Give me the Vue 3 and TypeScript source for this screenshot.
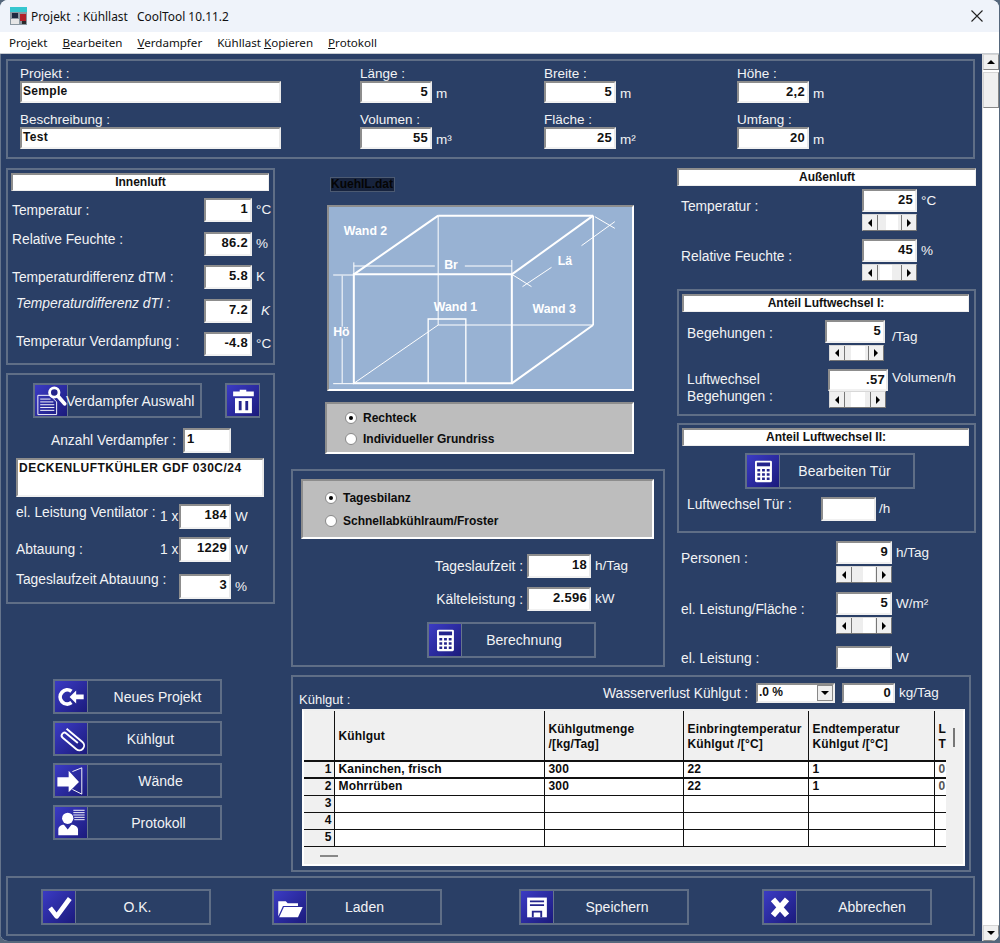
<script setup lang="ts">
const titleText = 'Projekt  : Kühllast   CoolTool 10.11.2'
const topFields = [
  { label: 'Projekt :', value: 'Semple', unit: '', wide: true },
  { label: 'Länge :', value: '5', unit: 'm', wide: false },
  { label: 'Breite :', value: '5', unit: 'm', wide: false },
  { label: 'Höhe :', value: '2,2', unit: 'm', wide: false },
  { label: 'Beschreibung :', value: 'Test', unit: '', wide: true },
  { label: 'Volumen :', value: '55', unit: 'm³', wide: false },
  { label: 'Fläche :', value: '25', unit: 'm²', wide: false },
  { label: 'Umfang :', value: '20', unit: 'm', wide: false },
]
const innenRows = [
  { label: 'Temperatur :', value: '1', unit: '°C', cls: '' },
  { label: 'Relative Feuchte :', value: '86.2', unit: '%', cls: 'lift4' },
  { label: 'Temperaturdifferenz dTM :', value: '5.8', unit: 'K', cls: '' },
  { label: 'Temperaturdifferenz dTI :', value: '7.2', unit: 'K', cls: 'lift7 ital' },
  { label: 'Temperatur Verdampfung :', value: '-4.8', unit: '°C', cls: 'lift3 ind' },
]
const sideButtons = [
  { label: 'Neues Projekt', icon: '#ic-back', shift: 7 },
  { label: 'Kühlgut', icon: '#ic-clip', shift: -7 },
  { label: 'Wände', icon: '#ic-wall', shift: 13 },
  { label: 'Protokoll', icon: '#ic-person', shift: 9 },
]
const footButtons = [
  { label: 'O.K.', icon: '#ic-check', shift: -10 },
  { label: 'Laden', icon: '#ic-folder', shift: -18 },
  { label: 'Speichern', icon: '#ic-floppy', shift: -7 },
  { label: 'Abbrechen', icon: '#ic-x', shift: 17 },
]
const goods = [
  ['1', 'Kaninchen, frisch', '300', '22', '1', '0'],
  ['2', 'Mohrrüben', '300', '22', '1', '0'],
  ['3', '', '', '', '', ''],
  ['4', '', '', '', '', ''],
  ['5', '', '', '', '', ''],
]
</script>

<template>
  <div class="window">
    <svg width="0" height="0" class="sprite">
      <symbol id="ic-calc" viewBox="0 0 33 33">
        <rect x="8" y="6" width="18" height="23" rx="1.5" fill="#fff" />
        <rect x="10" y="8" width="14" height="4" fill="#24248c" />
        <path d="M10.500 15h3v2.500h-3zM15.500 15h3v2.500h-3zM20.500 15h3v2.500h-3zM10.500 19.500h3v2.500h-3zM15.500 19.500h3v2.500h-3zM20.500 19.500h3v2.500h-3zM10.500 24h3v2.500h-3zM15.500 24h3v2.500h-3zM20.500 24h3v2.500h-3z" fill="#24248c" />
      </symbol>
      <symbol id="ic-search" viewBox="0 0 33 33">
        <path d="M2.500 11h13l7 7v13.500h-20z" fill="none" stroke="#fff" />
        <path d="M5 15h11M5 18h14M5 21h15M5 24h15M5 27h15" stroke="#fff" fill="none" />
        <circle cx="20" cy="8" r="5" fill="#24248c" stroke="#fff" stroke-width="3" />
        <path d="M24 12l7 8" stroke="#fff" stroke-width="4" stroke-linecap="round" />
      </symbol>
      <symbol id="ic-trash" viewBox="0 0 33 33">
        <path d="M13 7V5h7v2h8v5H6V7z" fill="#fff" />
        <path d="M8 14h18v16H8z" fill="#fff" />
        <path d="M12 17h3v10h-3zM19 17h3v10h-3z" fill="#24248c" />
      </symbol>
      <symbol id="ic-back" viewBox="0 0 33 33">
        <path d="M17 11a7.500 7.500 0 1 0 0 12" fill="none" stroke="#fff" stroke-width="4" />
        <path d="M15 17l7-7v4.500h8v5h-8V24z" fill="#fff" />
      </symbol>
      <symbol id="ic-clip" viewBox="0 0 33 33">
        <path transform="translate(17 17) rotate(40)" d="M-11 -5H11a5 5 0 0 1 0 10H-8a3 3 0 0 1 0 -6H8" fill="none" stroke="#fff" stroke-width="2" />
      </symbol>
      <symbol id="ic-wall" viewBox="0 0 33 33">
        <path d="M2 13h12V6l11 12-11 11v-6H2z" fill="#fff" />
        <path d="M18 7l10-4v28l-10-5" fill="none" stroke="#fff" />
      </symbol>
      <symbol id="ic-person" viewBox="0 0 33 33">
        <path d="M19 3.500h12M19 6h12M19 8.500h12M20 11h11M20 13.500h11" stroke="#fff" />
        <circle cx="13" cy="12" r="6" fill="#fff" />
        <path d="M3 30v-6c0-3 3-5 6-5l4 5 4-5c3 0 7 2 7 5v6z" fill="#fff" />
      </symbol>
      <symbol id="ic-check" viewBox="0 0 33 33">
        <path d="M7 18l7 9L28 8" fill="none" stroke="#fff" stroke-width="5" stroke-linejoin="round" />
      </symbol>
      <symbol id="ic-folder" viewBox="0 0 33 33">
        <path d="M4 11h8l2 2h11v3H9L4 27z" fill="#fff" />
        <path d="M10 17h20l-5 11H5z" fill="#fff" />
      </symbol>
      <symbol id="ic-floppy" viewBox="0 0 33 33">
        <path d="M6 7h21v21H6z" fill="#fff" />
        <path d="M9 10h15v2H9zM9 14h15v2H9zM11 21h11v7h-2v-5h-7v5h-2z" fill="#24248c" />
      </symbol>
      <symbol id="ic-x" viewBox="0 0 33 33">
        <path d="M9 9l15 17M24 9L9 26" fill="none" stroke="#fff" stroke-width="6" />
      </symbol>
    </svg>

    <div class="title">
      <svg class="appicon" width="17" height="18" viewBox="0 0 17 18">
        <rect width="17" height="18" fill="#8a97a0" />
        <rect width="17" height="5" fill="#35c6cf" />
        <rect x="2" y="6" width="6" height="5" fill="#1d2a40" />
        <rect x="10" y="7" width="6" height="7" fill="#b3202a" />
        <rect x="1" y="12" width="8" height="5" fill="#e6e6e6" />
        <rect x="12" y="14" width="4" height="3" fill="#2a2a2a" />
      </svg>
      <span class="title-text">{{ titleText }}</span>
      <svg class="close" width="12" height="12" viewBox="0 0 12 12">
        <path d="M.5.500l11 11M11.500.500l-11 11" stroke="#222" stroke-width="1.100" />
      </svg>
    </div>
    <div class="menu">
      <span>Projekt</span>
      <span><u>B</u>earbeiten</span>
      <span><u>V</u>erdampfer</span>
      <span>Kühllast <u>K</u>opieren</span>
      <span><u>P</u>rotokoll</span>
    </div>

    <div class="client">
      <div class="form">
        <div class="panel top-panel">
          <div v-for="f in topFields" :key="f.label" class="top-field">
            <div class="top-label">{{ f.label }}</div>
            <div class="top-line">
              <div class="val" :class="f.wide ? 'val-wide' : 'val-dim'">{{ f.value }}</div>
              <span class="unit">{{ f.unit }}</span>
            </div>
          </div>
        </div>

        <div class="main">
          <div class="left-col">
            <div class="panel innen">
              <div class="head">Innenluft</div>
              <div class="innen-rows">
                <div v-for="r in innenRows" :key="r.label" class="innen-row">
                  <span class="txt innen-label" :class="r.cls">{{ r.label }}</span>
                  <div class="val val-48">{{ r.value }}</div>
                  <span class="unit" :class="r.cls.includes('ital') ? 'ital' : ''">{{ r.unit }}</span>
                </div>
              </div>
            </div>

            <div class="panel verd">
              <div class="verd-top">
                <div class="btn btn-verd">
                  <div class="ico"><svg><use href="#ic-search" /></svg></div>
                  <span class="btn-label verd-label">Verdampfer Auswahl</span>
                </div>
                <div class="btn btn-trash">
                  <div class="ico"><svg><use href="#ic-trash" /></svg></div>
                </div>
              </div>
              <div class="anzahl">
                <span class="txt">Anzahl Verdampfer :</span>
                <div class="val val-48 val-left">1</div>
              </div>
              <div class="val device">DECKENLUFTKÜHLER GDF 030C/24</div>
              <div class="verd-row first">
                <span class="txt verd-name lift4">el. Leistung Ventilator :</span>
                <span class="txt times">1 x</span>
                <div class="val val-52">184</div>
                <span class="unit">W</span>
              </div>
              <div class="verd-row">
                <span class="txt verd-name">Abtauung :</span>
                <span class="txt times">1 x</span>
                <div class="val val-52">1229</div>
                <span class="unit">W</span>
              </div>
              <div class="verd-row last">
                <span class="txt verd-name lift7">Tageslaufzeit Abtauung :</span>
                <div class="val val-52">3</div>
                <span class="unit">%</span>
              </div>
            </div>

            <div class="side-buttons">
              <div v-for="b in sideButtons" :key="b.label" class="btn">
                <div class="ico"><svg><use :href="b.icon" /></svg></div>
                <span class="btn-label" :style="{ marginLeft: b.shift + 'px' }">{{ b.label }}</span>
              </div>
            </div>
          </div>

          <div class="right-area">
            <div class="upper">
              <div class="mid-col">
                <div class="filename">KuehlL.dat</div>
                <div class="picture">
                  <svg width="303" height="182" viewBox="118 126 908 546">
                    <g fill="none" stroke="#fff">
                      <path d="M192 328H666V655H192Z" stroke-width="6" />
                      <path d="M445 152H910" stroke-width="6" />
                      <path d="M910 152V480" stroke-width="5" />
                      <path d="M445 152V480H910" stroke-width="3" />
                      <path d="M192 328L445 152M666 328L910 152M666 655L910 480" stroke-width="6" />
                      <path d="M192 655L445 480" stroke-width="3" />
                      <path d="M415 655V462H528V655" stroke-width="4" />
                      <path d="M130 330H192M130 656H192M157 332V485M157 520V655" stroke-width="3" />
                      <path d="M192 303H435M525 303H666M192 292V328M666 285V328" stroke-width="3" />
                      <path d="M666 328L725 365M698 365L785 307M915 155L975 190M875 242L975 170" stroke-width="3" />
                    </g>
                    <g class="pic-text">
                      <text x="162" y="211">Wand 2</text>
                      <text x="432" y="438">Wand 1</text>
                      <text x="728" y="444">Wand 3</text>
                      <text x="463" y="312">Br</text>
                      <text x="804" y="300">Lä</text>
                      <text x="130" y="513">Hö</text>
                    </g>
                  </svg>
                </div>
                <div class="radio-box shape">
                  <label class="radio-line"><i class="radio on"></i>Rechteck</label>
                  <label class="radio-line"><i class="radio"></i>Individueller Grundriss</label>
                </div>
                <div class="panel calc">
                  <div class="radio-box mode">
                    <label class="radio-line"><i class="radio on"></i>Tagesbilanz</label>
                    <label class="radio-line"><i class="radio"></i>Schnellabkühlraum/Froster</label>
                  </div>
                  <div class="calc-row first">
                    <span class="txt calc-label">Tageslaufzeit :</span>
                    <div class="val val-64">18</div>
                    <span class="unit">h/Tag</span>
                  </div>
                  <div class="calc-row">
                    <span class="txt calc-label">Kälteleistung :</span>
                    <div class="val val-64">2.596</div>
                    <span class="unit">kW</span>
                  </div>
                  <div class="btn btn-calc">
                    <div class="ico"><svg><use href="#ic-calc" /></svg></div>
                    <span class="btn-label calc-btn-label">Berechnung</span>
                  </div>
                </div>
              </div>

              <div class="right-col">
                <div class="head">Außenluft</div>
                <div class="spin-row r-temp">
                  <span class="txt spin-label">Temperatur :</span>
                  <div class="spin w55">
                    <div class="val">25</div>
                    <div class="hs"><i class="al"></i><b class="hs-track"><em class="o8"></em></b><i class="ar"></i></div>
                  </div>
                  <span class="unit">°C</span>
                </div>
                <div class="spin-row r-hum">
                  <span class="txt spin-label">Relative Feuchte :</span>
                  <div class="spin w55">
                    <div class="val">45</div>
                    <div class="hs"><i class="al"></i><b class="hs-track"><em class="o2"></em></b><i class="ar"></i></div>
                  </div>
                  <span class="unit">%</span>
                </div>

                <div class="panel air1">
                  <div class="head">Anteil Luftwechsel I:</div>
                  <div class="air-row a1">
                    <span class="txt air-label">Begehungen :</span>
                    <div class="spin w60">
                      <div class="val">5</div>
                      <div class="hs hs-in4"><i class="al"></i><b class="hs-track"><em class="o6"></em></b><i class="ar"></i></div>
                    </div>
                    <span class="unit tag">/Tag</span>
                  </div>
                  <div class="air-row a2">
                    <span class="txt air-label two">Luftwechsel<br />Begehungen :</span>
                    <div class="spin w60">
                      <div class="val val-flush">.57</div>
                      <div class="hs hs-in1"><i class="al"></i><b class="hs-track"><em class="o6"></em></b><i class="ar"></i></div>
                    </div>
                    <span class="unit vol">Volumen/h</span>
                  </div>
                </div>

                <div class="panel air2">
                  <div class="head">Anteil Luftwechsel II:</div>
                  <div class="btn btn-door">
                    <div class="ico"><svg><use href="#ic-calc" /></svg></div>
                    <span class="btn-label door-btn-label">Bearbeiten Tür</span>
                  </div>
                  <div class="door-row">
                    <span class="txt door-label">Luftwechsel Tür :</span>
                    <div class="val val-55"></div>
                    <span class="unit">/h</span>
                  </div>
                </div>

                <div class="spin-row r-pers">
                  <span class="txt spin-label long">Personen :</span>
                  <div class="spin w56">
                    <div class="val">9</div>
                    <div class="hs"><i class="al"></i><b class="hs-track"><em class="o11"></em></b><i class="ar"></i></div>
                  </div>
                  <span class="unit">h/Tag</span>
                </div>
                <div class="spin-row r-area">
                  <span class="txt spin-label long">el. Leistung/Fläche :</span>
                  <div class="spin w56">
                    <div class="val">5</div>
                    <div class="hs"><i class="al"></i><b class="hs-track"><em class="o11"></em></b><i class="ar"></i></div>
                  </div>
                  <span class="unit">W/m²</span>
                </div>
                <div class="spin-row r-el">
                  <span class="txt spin-label long">el. Leistung :</span>
                  <div class="spin w56"><div class="val"></div></div>
                  <span class="unit">W</span>
                </div>
              </div>
            </div>

            <div class="panel goods">
              <div class="goods-top">
                <span class="txt goods-title">Kühlgut :</span>
                <span class="txt loss-label">Wasserverlust Kühlgut :</span>
                <div class="select">
                  <span>.0 %</span>
                  <i class="select-btn"></i>
                </div>
                <div class="val val-53">0</div>
                <span class="unit">kg/Tag</span>
              </div>
              <div class="grid-box">
                <table class="grid">
                  <colgroup>
                    <col class="c0" /><col class="c1" /><col class="c2" /><col class="c3" /><col class="c4" /><col class="c5" />
                  </colgroup>
                  <thead>
                    <tr>
                      <th></th>
                      <th>Kühlgut</th>
                      <th>Kühlgutmenge<br />/[kg/Tag]</th>
                      <th>Einbringtemperatur<br />Kühlgut /[°C]</th>
                      <th>Endtemperatur<br />Kühlgut /[°C]</th>
                      <th>L<br />T</th>
                    </tr>
                  </thead>
                  <tbody>
                    <tr v-for="(row, i) in goods" :key="row[0]" :class="i < 2 ? 'filled' : ''">
                      <td class="num">{{ row[0] }}</td>
                      <td v-for="(cell, j) in row.slice(1)" :key="j">{{ cell }}</td>
                    </tr>
                  </tbody>
                </table>
                <i class="grid-thumb"></i>
                <i class="grid-dash"></i>
              </div>
            </div>
          </div>
        </div>

        <div class="panel foot">
          <div v-for="b in footButtons" :key="b.label" class="btn">
            <div class="ico"><svg><use :href="b.icon" /></svg></div>
            <span class="btn-label" :style="{ marginLeft: b.shift + 'px' }">{{ b.label }}</span>
          </div>
        </div>
      </div>

      <div class="vscroll">
        <div class="vbtn"><i class="tri-up"></i></div>
        <div class="vthumb"></div>
        <div class="vfill"></div>
        <div class="vbtn"><i class="tri-down"></i></div>
      </div>
    </div>
  </div>
</template>

<style>
html,
body {
  margin: 0;
  background: #55677c;
  overflow: hidden;
}
</style>

<style scoped>
* {
  box-sizing: border-box;
}

.window {
  width: 999px;
  height: 941px;
  display: flex;
  flex-direction: column;
  border-radius: 8px;
  overflow: hidden;
  background: #fff;
  font-family: "Liberation Sans", Arial, sans-serif;
}

.sprite {
  position: absolute;
}

.title {
  height: 32px;
  display: flex;
  align-items: center;
  padding: 0 16px 0 10px;
  background: #eff3fa;
  font-family: "Noto Sans", sans-serif;
  font-size: 11.900px;
  color: #111;
}

.appicon {
  margin-right: 4px;
}

.title-text {
  flex: 1;
  white-space: pre;
}

.menu {
  height: 22px;
  display: flex;
  align-items: center;
  gap: 15px;
  padding-left: 9px;
  background: #fff;
  font-family: "Noto Sans", sans-serif;
  font-size: 11.600px;
  color: #111;
  border-bottom: 1px solid #c9cdd2;
}

.client {
  flex: 1;
  display: flex;
  min-height: 0;
}

.form {
  width: 982px;
  padding: 5px 6px 0 5px;
  background: #2a3f66;
  border-left: 1px solid #66758c;
  color: #f2f3f5;
  font-size: 14px;
}

.panel {
  border: 2px solid #5f6e86;
}

/* top block */
.top-panel {
  width: 969px;
  height: 100px;
  display: grid;
  grid-template-columns: 340px 184px 193px 1fr;
  grid-auto-rows: 46px;
  padding: 5px 0 0 12px;
}

.top-label {
  height: 15px;
  line-height: 15px;
  font-size: 13.500px;
}

.top-line {
  display: flex;
  align-items: flex-end;
}

.val {
  height: 23px;
  background: #fff;
  border-style: solid;
  border-width: 2px 2px 2px 2px;
  border-color: #8d8d8d #e9e9e9 #f1f1f1 #8d8d8d;
  color: #111;
  font-weight: 700;
  font-size: 13px;
  line-height: 17px;
  text-align: right;
  padding-right: 2px;
  letter-spacing: 0.3px;
}

.val-wide {
  width: 261px;
  height: 22px;
  text-align: left;
  padding-left: 1px;
  font-size: 12px;
}

.val-dim {
  width: 72px;
  height: 22px;
}

.unit {
  margin-left: 4px;
  font-size: 13.500px;
  line-height: 18px;
}

/* left column */
.main {
  display: flex;
  margin-top: 9px;
  height: 704px;
}

.left-col {
  width: 269px;
  margin-right: 16px;
}

.head {
  height: 18px;
  background: #fff;
  border-style: solid;
  border-width: 2px 1px 1px 2px;
  border-color: #8d8d8d #eee #eee #8d8d8d;
  color: #111;
  font-weight: 700;
  font-size: 12px;
  line-height: 15px;
  text-align: center;
}

.txt {
  font-size: 13.800px;
  line-height: 17px;
  white-space: nowrap;
}

.innen {
  height: 197px;
  padding: 3px 4px 0 3px;
}

.innen-rows {
  display: grid;
  grid-auto-rows: 24px;
  row-gap: 9.500px;
  margin-top: 7px;
}

.innen-row {
  display: flex;
  align-items: center;
}

.innen-label {
  width: 193px;
  padding-left: 1px;
}

.val-48 {
  width: 48px;
  height: 24px;
}

.lift3 {
  margin-bottom: 6px;
}

.lift4 {
  margin-bottom: 8px;
}

.lift7 {
  margin-bottom: 14px;
}

.ind {
  padding-left: 5px;
}

.ital {
  font-style: italic;
  padding-left: 5px;
}

.verd {
  height: 231px;
  margin-top: 8px;
  padding-top: 8px;
}

.verd-top {
  display: flex;
  gap: 23px;
  padding-left: 25px;
}

.btn {
  display: flex;
  width: 169px;
  height: 35px;
  border: 2px solid #5f6e86;
  flex: none;
}

.ico {
  width: 33px;
  flex: none;
  background: linear-gradient(135deg, #3b3bc4, #1b1b7c);
  border-right: 1px solid #66758c;
}

.ico svg {
  width: 32px;
  height: 31px;
  display: block;
}

.btn-label {
  flex: 1;
  align-self: center;
  text-align: center;
  font-size: 14px;
  white-space: nowrap;
}

.btn-trash {
  width: 35px;
}

.verd-label {
  text-align: left;
  margin-left: -2px;
}

.calc-btn-label {
  margin-left: -8px;
}

.door-btn-label {
  margin-left: -4px;
}

.anzahl {
  display: flex;
  align-items: center;
  justify-content: flex-end;
  gap: 7px;
  margin-top: 10px;
  padding-right: 42px;
}

.anzahl .val {
  height: 25px;
}

.val-left {
  text-align: left;
  padding-left: 2px;
}

.device {
  width: 248px;
  height: 39px;
  margin: 5px 0 0 8px;
  text-align: left;
  padding-left: 1px;
  letter-spacing: 0.500px;
  font-size: 12px;
}

.verd-row {
  display: flex;
  align-items: center;
  margin-top: 8px;
  padding-left: 8px;
}

.verd-row.first {
  margin-top: 7px;
}

.verd-row.last {
  margin-top: 9px;
}

.verd-name {
  width: 144px;
}

.verd-row.last .verd-name {
  width: 163px;
}

.times {
  width: 19px;
}

.val-52 {
  width: 52px;
  height: 25px;
}

.side-buttons {
  display: flex;
  flex-direction: column;
  gap: 7px;
  margin: 75px 0 0 47px;
}

/* middle column */
.right-area {
  width: 685px;
}

.upper {
  display: flex;
  height: 507px;
  gap: 12px;
}

.mid-col {
  width: 374px;
}

.filename {
  width: 65px;
  height: 15px;
  margin: 9px 0 0 39px;
  background: #17233d;
  border: 1px solid #4c5a72;
  color: #050505;
  font-weight: 700;
  font-size: 12px;
  line-height: 13px;
  white-space: nowrap;
}

.picture {
  width: 307px;
  height: 186px;
  margin: 13px 0 0 36px;
  background: #98b2d3;
  border-style: solid;
  border-width: 2px;
  border-color: #8d8d8d #fff #fff #8d8d8d;
}

.picture svg {
  display: block;
}

.pic-text text {
  fill: #fff;
  font-size: 37px;
  font-weight: 700;
}

.radio-box {
  background: #bdbdbd;
  border-style: solid;
  border-width: 2px;
  border-color: #8d8d8d #fff #fff #8d8d8d;
  color: #0c0c0c;
  font-weight: 700;
  font-size: 12px;
  display: flex;
  flex-direction: column;
}

.shape {
  width: 309px;
  height: 52px;
  margin: 11px 0 0 34px;
  padding: 6px 0 0 18px;
  gap: 6px;
}

.radio-line {
  display: flex;
  align-items: center;
  height: 15px;
  gap: 6px;
}

.radio {
  width: 12px;
  height: 12px;
  border-radius: 50%;
  background: #fff;
  border: 1px solid #888;
  display: flex;
  align-items: center;
  justify-content: center;
}

.radio.on::after {
  content: "";
  width: 4px;
  height: 4px;
  border-radius: 50%;
  background: #000;
}

.calc {
  height: 198px;
  margin-top: 15px;
  padding: 8px 0 0 8px;
}

.mode {
  width: 353px;
  height: 60px;
  padding: 9px 0 0 22px;
  gap: 8px;
}

.calc-row {
  display: flex;
  align-items: center;
  margin-top: 9px;
}

.calc-row.first {
  margin-top: 15px;
}

.calc-label {
  width: 222px;
  margin-right: 4px;
  text-align: right;
}

.val-64 {
  width: 64px;
  height: 24px;
}

.btn-calc {
  margin: 11px 0 0 126px;
  height: 36px;
}

/* right column */
.right-col {
  width: 299px;
}

.spin-row {
  display: flex;
  align-items: flex-start;
  padding-left: 4px;
}

.spin-row .unit {
  margin-top: 3px;
}

.spin-label {
  width: 181px;
  align-self: center;
  margin-bottom: 8px;
}

.spin-label.long {
  width: 155px;
}

.r-temp {
  margin-top: 3px;
}

.r-hum {
  margin-top: 8px;
}

.r-pers {
  margin-top: 8px;
}

.r-area {
  margin-top: 9px;
}

.r-el {
  margin-top: 12px;
}

.r-el .spin-label {
  margin-bottom: 0;
  margin-top: 2px;
}

.spin {
  flex: none;
}

.w55 {
  width: 55px;
}

.w56 {
  width: 56px;
}

.w60 {
  width: 60px;
}

.val-55 {
  width: 55px;
  height: 24px;
}

.val-53 {
  width: 53px;
  height: 20px;
  line-height: 15px;
}

.hs {
  display: flex;
  height: 17px;
  margin-top: 2px;
  background: #eee;
  border: 1px solid #d8d8d8;
  border-right-color: #777;
  border-bottom-color: #777;
}

.hs-in4 {
  margin: 2px 1px 0 4px;
  height: 16px;
}

.hs-in1 {
  margin: 0 2px 0 1px;
  height: 17px;
}

.hs i {
  width: 15px;
  flex: none;
  background: #f0f0f0;
  display: flex;
  align-items: center;
  justify-content: center;
}

.hs i::after {
  content: "";
  border: 4px solid transparent;
}

.al {
  border-right: 1px solid #777;
}

.ar {
  border-left: 1px solid #777;
}

.al::after {
  border-right-color: #000 !important;
  border-left-width: 0 !important;
}

.ar::after {
  border-left-color: #000 !important;
  border-right-width: 0 !important;
}

.hs-track {
  flex: 1;
  display: flex;
}

.hs-track em {
  display: block;
  width: 12px;
  background: #fff;
}

.o2 {
  margin-left: 2px;
}

.o6 {
  margin-left: 6px;
  width: 14px !important;
}

.o8 {
  margin-left: 8px;
}

.o11 {
  margin-left: 11px;
}

.air1 {
  height: 127px;
  margin-top: 8px;
  padding: 3px 5px 0 3px;
}

.air-row {
  display: flex;
  align-items: flex-start;
}

.a1 {
  margin-top: 8px;
}

.a2 {
  margin-top: 8px;
}

.a1 .val {
  height: 23px;
}

.a2 .val {
  height: 22px;
}

.air-label {
  margin-left: 5px;
  width: 138px;
  padding-top: 5px;
}

.two {
  width: 141px;
  padding-top: 2px;
}

.tag {
  margin: 8px 0 0 7px;
}

.vol {
  margin: 0 0 0 4px;
  white-space: nowrap;
}

.val-flush {
  padding-right: 1px;
}

.air2 {
  height: 110px;
  margin-top: 7px;
  padding: 3px 5px 0 3px;
}

.btn-door {
  margin: 7px 0 0 63px;
  width: 170px;
  height: 36px;
}

.door-row {
  display: flex;
  align-items: center;
  margin-top: 7px;
}

.door-label {
  width: 139px;
  padding-left: 5px;
  margin-bottom: 8px;
}

.door-row .unit {
  margin-left: 3px;
}

/* goods table */
.goods {
  width: 680px;
  height: 197px;
}

.goods-top {
  display: flex;
  align-items: center;
  height: 20px;
  margin-top: 6px;
}

.goods-title {
  width: 310px;
  padding-left: 6px;
  font-size: 13px;
  margin-top: 12px;
}

.loss-label {
  width: 146px;
  margin-right: 7px;
}

.select {
  width: 79px;
  height: 20px;
  background: #fff;
  border: 2px solid;
  border-color: #8d8d8d #eee #eee #8d8d8d;
  color: #111;
  font-weight: 700;
  font-size: 12px;
  line-height: 15px;
  display: flex;
  justify-content: space-between;
  margin-right: 7px;
  padding-left: 1px;
}

.select-btn {
  width: 16px;
  height: 16px;
  background: #eee;
  border: 1px solid #888;
  display: flex;
  align-items: center;
  justify-content: center;
}

.select-btn::after {
  content: "";
  border: 4px solid transparent;
  border-top-color: #000;
  border-bottom-width: 0;
}

.grid-box {
  position: relative;
  width: 663px;
  height: 157px;
  margin: 6px 0 0 9px;
  background: #f0f0f0;
  border: 2px solid #fff;
  border-top-color: #eee;
  overflow: hidden;
}

.grid {
  table-layout: fixed;
  width: 642px;
  border-collapse: collapse;
  color: #0c0c0c;
  font-size: 12px;
  font-weight: 700;
  letter-spacing: 0.150px;
}

.c0 {
  width: 30px;
}

.c1 {
  width: 210px;
}

.c2 {
  width: 139px;
}

.c3 {
  width: 125px;
}

.c4 {
  width: 126px;
}

.c5 {
  width: 12px;
}

.grid th {
  height: 50px;
  background: #f0f0f0;
  text-align: left;
  padding: 2px 0 0 4px;
  line-height: 15px;
  border-right: 1px solid #111;
  border-bottom: 2px solid #111;
  white-space: nowrap;
}

.grid th:last-child {
  border-right: none;
}

.grid td {
  height: 17px;
  padding: 0 0 0 4px;
  background: #fff;
  border-right: 1px solid #111;
  border-bottom: 1px solid #111;
  white-space: nowrap;
  line-height: 15px;
}

.grid td:last-child {
  border-right: none;
  color: #555;
}

.grid .filled:first-child td {
  border-bottom-width: 2px;
}

.grid td.num {
  background: #f0f0f0;
  text-align: right;
  padding: 0 2px 0 0;
}

.grid-thumb {
  position: absolute;
  left: 649px;
  top: 17px;
  width: 2px;
  height: 19px;
  background: #777;
}

.grid-dash {
  position: absolute;
  left: 16px;
  top: 144px;
  width: 18px;
  height: 2px;
  background: #888;
}

/* footer */
.foot {
  width: 969px;
  height: 60px;
  margin-top: 4px;
  display: grid;
  grid-template-columns: 231px 247px 243px 1fr;
  padding: 11px 0 0 33px;
}

.foot .btn {
  height: 36px;
  width: 170px;
}

/* scrollbar */
.vscroll {
  width: 17px;
  display: flex;
  flex-direction: column;
  background: #fff;
  border-left: 1px solid #ddd;
}

.vbtn {
  height: 16px;
  background: #f0f0f0;
  border: 1px solid #d5d5d5;
  border-right-color: #888;
  border-bottom-color: #888;
  display: flex;
  align-items: center;
  justify-content: center;
}

.vthumb {
  height: 36px;
  margin-top: 2px;
  background: #f0f0f0;
  border: 1px solid #d5d5d5;
  border-right-color: #888;
  border-bottom-color: #888;
}

.vfill {
  flex: 1;
}

.tri-up,
.tri-down {
  border: 4px solid transparent;
}

.tri-up {
  border-bottom-color: #000;
  border-top-width: 0;
}

.tri-down {
  border-top-color: #000;
  border-bottom-width: 0;
}
</style>
